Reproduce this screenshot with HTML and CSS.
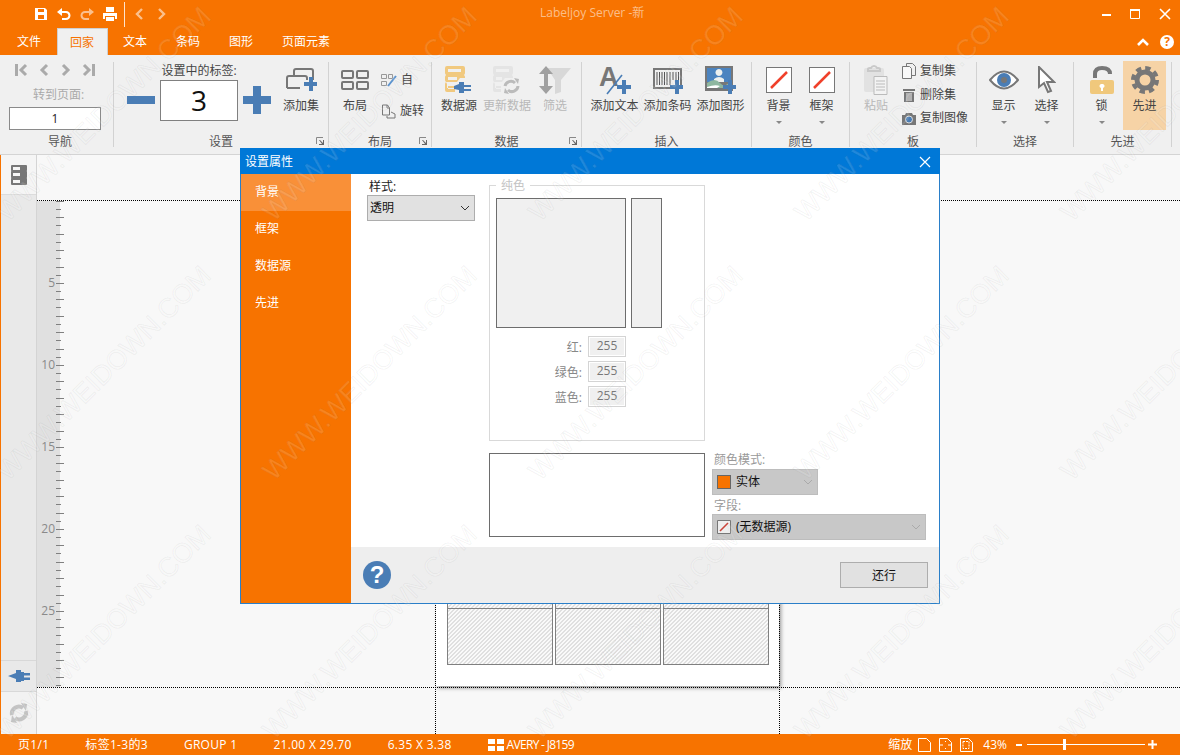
FILE: index.html
```html
<!DOCTYPE html>
<html lang="zh-CN">
<head>
  <meta charset="UTF-8">
  <title>Labeljoy Server</title>
  <link rel="stylesheet" href="styles.css">
</head>
<body>
  <header class="top">
    <div class="titlebar">
      <div class="quick">
        <svg class="q-icon" viewBox="0 0 14 14"><path fill="#fff" fill-rule="evenodd" d="M1 1h10l2 2v10H1zM4 2v3h6V2zM4 8v4h6V8z"/></svg>
        <svg class="q-icon" viewBox="0 0 14 14"><path fill="none" stroke="#fff" stroke-width="2" d="M3 5h6a3 3 0 0 1 0 7H5"/><path fill="#fff" d="M5 1v8L0 5z"/></svg>
        <svg class="q-icon dim" viewBox="0 0 14 14"><path fill="none" stroke="#fff" stroke-width="2" d="M11 5H5a3 3 0 0 0 0 7h4"/><path fill="#fff" d="M9 1v8l5-4z"/></svg>
        <svg class="q-icon" viewBox="0 0 14 14"><path fill="#fff" fill-rule="evenodd" d="M3 0h8v5H3zM0 6h14v6h-2V9H2v3H0zM3 10h8v4H3z"/></svg>
        <i class="q-sep"></i>
        <svg class="q-nav dim" viewBox="0 0 10 14"><path fill="none" stroke="#fff" stroke-width="2.4" d="M8 2 3 7l5 5"/></svg>
        <svg class="q-nav dim" viewBox="0 0 10 14"><path fill="none" stroke="#fff" stroke-width="2.4" d="m2 2 5 5-5 5"/></svg>
      </div>
      <div class="app-title">Labeljoy Server -新</div>
      <div class="win-controls">
        <svg viewBox="0 0 12 12"><path fill="#fff" d="M3 6h9v2H3z"/></svg>
        <svg viewBox="0 0 12 12"><path fill="none" stroke="#fff" d="M1.500 1.500h9v9h-9z"/><path fill="#fff" d="M1 1h10v2H1z"/></svg>
        <svg viewBox="0 0 12 12"><path stroke="#fff" stroke-width="1.600" d="m1 1 10 10M11 1 1 11"/></svg>
      </div>
    </div>
    <nav class="tabs">
      <a class="tab">文件</a>
      <a class="tab active">回家</a>
      <a class="tab">文本</a>
      <a class="tab">条码</a>
      <a class="tab">图形</a>
      <a class="tab">页面元素</a>
      <div class="tab-tools">
        <svg viewBox="0 0 12 8"><path fill="none" stroke="#fff" stroke-width="2.600" d="m1 7 5-5 5 5"/></svg>
        <span class="help-dot">?</span>
      </div>
    </nav>
  </header>

  <section class="ribbon">
    <div class="group g-nav">
      <div class="group-body column">
        <div class="nav-arrows">
          <svg viewBox="0 0 14 14"><path fill="#aaa" d="M1 1h3v12H1z"/><path fill="none" stroke="#aaa" stroke-width="3" d="M12 2 7 7l5 5"/></svg>
          <svg viewBox="0 0 14 14"><path fill="none" stroke="#aaa" stroke-width="3" d="M10 2 5 7l5 5"/></svg>
          <svg viewBox="0 0 14 14"><path fill="none" stroke="#aaa" stroke-width="3" d="m4 2 5 5-5 5"/></svg>
          <svg viewBox="0 0 14 14"><path fill="#aaa" d="M10 1h3v12h-3z"/><path fill="none" stroke="#aaa" stroke-width="3" d="m2 2 5 5-5 5"/></svg>
        </div>
        <div class="nav-label">转到页面:</div>
        <div class="page-input">1</div>
      </div>
      <div class="group-label">导航</div>
    </div>

    <div class="group g-set">
      <div class="group-body">
        <svg class="step" viewBox="0 0 28 41"><path fill="#4a7db5" d="M0 16h28v8H0z"/></svg>
        <div class="count">
          <div class="count-label">设置中的标签:</div>
          <div class="count-box">3</div>
        </div>
        <svg class="step" viewBox="0 0 28 41"><path fill="#4a7db5" d="M0 16h10V6h8v10h10v8H18v10h-8V24H0z"/></svg>
        <button class="rbtn add-set">
          <span class="ricon">
            <svg width="32" height="25" viewBox="0 0 32 25"><path fill="none" stroke="#777" stroke-width="2" d="M2 21V11q0-2 2-2h16q2 0 2 2v2M2 21h13M9 9V4q0-2 2-2h15q2 0 2 2v9"/><path fill="#4a7db5" d="M19 15h5v-5h4v5h4v4h-4v5h-4v-5h-5z"/></svg>
          </span>
          <span class="rtext">添加集</span>
        </button>
      </div>
      <div class="group-label">设置</div>
      <svg class="launcher" viewBox="0 0 8 8"><path fill="none" stroke="#888" d="M.5 7V.5H7"/><path fill="#666" d="M3 3h1l3 3V3h1v5H3V7h3z"/></svg>
    </div>

    <div class="group g-layout">
      <div class="group-body">
        <button class="rbtn wide36">
          <span class="ricon">
            <svg width="28" height="20" viewBox="0 0 28 20"><g fill="none" stroke="#777" stroke-width="2"><rect x="1" y="1" width="11" height="7" rx="1"/><rect x="16" y="1" width="11" height="7" rx="1"/><rect x="1" y="12" width="11" height="7" rx="1"/><rect x="16" y="12" width="11" height="7" rx="1"/></g></svg>
          </span>
          <span class="rtext">布局</span>
        </button>
        <div class="side-list layout-list">
          <div class="side-item">
            <svg width="16" height="14" viewBox="0 0 16 14"><g fill="none" stroke="#999"><path d="M.5 1.500h5v4h-5zM7.500 1.500h4v4h-4zM.5 8.500h5v4h-5z"/></g><path stroke="#5b93cf" stroke-width="2" d="m7 13 8-10"/></svg>
            <span>自</span>
          </div>
          <div class="side-item">
            <svg width="15" height="15" viewBox="0 0 15 15"><path fill="none" stroke="#777" d="M1.500 1h5l2 3v7h-7zM6 1v3h2.500M10 8l4 2v4H6v-2"/></svg>
            <span>旋转</span>
          </div>
        </div>
      </div>
      <div class="group-label">布局</div>
      <svg class="launcher" viewBox="0 0 8 8"><path fill="none" stroke="#888" d="M.5 7V.5H7"/><path fill="#666" d="M3 3h1l3 3V3h1v5H3V7h3z"/></svg>
    </div>

    <div class="group g-data">
      <div class="group-body">
        <button class="rbtn wide48">
          <span class="ricon">
            <svg width="28" height="28" viewBox="0 0 28 28"><path fill="#f1c97f" fill-rule="evenodd" d="M2 0h16q2 0 2 2v5q0 1-1 2 1 1 1 2v1h-5l-3 4H2q-1 0-1 1 1 0 1 1v4h8v4H2q-2 0-2-2v-6q0-1 1-2-1-1-1-2v-3q0-1 1-2-1-1-1-2V2q0-2 2-2zM3 3v3h13V3zM3 11v3h9v-3zM3 20v3h7v-3z"/><path fill="#4a7db5" d="M9 20l5-2v-2h5v3h7v2h-7v2h7v2h-7v2h-5v-3l-5-1z"/></svg>
          </span>
          <span class="rtext">数据源</span>
        </button>
        <button class="rbtn wide48 disabled">
          <span class="ricon">
            <svg width="28" height="28" viewBox="0 0 28 28"><path fill="#e4e4e4" fill-rule="evenodd" d="M2 0h16q2 0 2 2v5q0 1-1 2 1 1 1 2v1h-8l-3 4H2q-1 0-1 1 1 0 1 1v4h6v4H2q-2 0-2-2v-6q0-1 1-2-1-1-1-2v-3q0-1 1-2-1-1-1-2V2q0-2 2-2zM3 3v3h13V3zM3 11v3h6v-3zM3 20v3h5v-3z"/><g fill="none" stroke="#bbb" stroke-width="3"><path d="M12 20a6 6 0 0 1 10-3M25 20a6 6 0 0 1-10 4"/></g><path fill="#bbb" d="m21 12 5 1-1 5zM16 28l-5-1 1-5z"/></svg>
          </span>
          <span class="rtext">更新数据</span>
        </button>
        <button class="rbtn wide48 disabled">
          <span class="ricon">
            <svg width="32" height="28" viewBox="0 0 32 28"><path fill="#d8d8d8" d="M8 2h24l-10 12v12l-6 2V14z"/><path fill="#a0a0a0" d="M7 0l7 8H9v12h5l-7 8-7-8h5V8H0z"/></svg>
          </span>
          <span class="rtext">筛选</span>
        </button>
      </div>
      <div class="group-label">数据</div>
      <svg class="launcher" viewBox="0 0 8 8"><path fill="none" stroke="#888" d="M.5 7V.5H7"/><path fill="#666" d="M3 3h1l3 3V3h1v5H3V7h3z"/></svg>
    </div>

    <div class="group g-insert">
      <div class="group-body">
        <button class="rbtn wide53">
          <span class="ricon">
            <svg width="32" height="30" viewBox="0 0 32 30"><text x="0" y="21" class="svg-a">A</text><path stroke="#4a7db5" stroke-width="1.600" d="m8 29 15-19"/><path fill="#4a7db5" d="M18 20h5v-5h4v5h5v4h-5v5h-4v-5h-5z"/></svg>
          </span>
          <span class="rtext">添加文本</span>
        </button>
        <button class="rbtn wide53">
          <span class="ricon">
            <svg width="30" height="28" viewBox="0 0 30 28"><path fill="none" stroke="#777" stroke-width="2" d="M1 3h27v19H1z"/><path stroke="#555" d="M4 6v13M6.500 6v13M9 6v13M11.500 6v13M14 6v13M17 6v13M20 6v8M23 6v8M25.500 6v8"/><path fill="#4a7db5" d="M17 19h5v-5h4v5h4v4h-4v5h-4v-5h-5z"/></svg>
          </span>
          <span class="rtext">添加条码</span>
        </button>
        <button class="rbtn wide53">
          <span class="ricon">
            <svg width="31" height="28" viewBox="0 0 31 28"><path fill="#777" d="M0 0h28v25H0z"/><path fill="#4c84c0" d="M2 2h24v14H2z"/><path fill="#eef0ee" d="M14 3a3.500 3.500 0 1 1-.1 0zM9 13q5-4 10 0v3H9z"/><path fill="#8eb7a0" d="M2 17q8-6 13 0t11-3v8H2z"/><path fill="#fff" d="M2 21q8-3 13-1l-3 2H2z"/><path fill="#4a7db5" d="M18 19h5v-5h4v5h4v4h-4v5h-4v-5h-5z"/></svg>
          </span>
          <span class="rtext">添加图形</span>
        </button>
      </div>
      <div class="group-label">插入</div>
    </div>

    <div class="group g-color">
      <div class="group-body">
        <button class="rbtn wide43">
          <span class="ricon"><span class="swatch"><svg viewBox="0 0 24 24"><path stroke="#f0402a" stroke-width="2.500" d="m4 20 16-16"/></svg></span></span>
          <span class="rtext">背景</span>
          <i class="drop"></i>
        </button>
        <button class="rbtn wide43">
          <span class="ricon"><span class="swatch"><svg viewBox="0 0 24 24"><path stroke="#f0402a" stroke-width="2.500" d="m4 20 16-16"/></svg></span></span>
          <span class="rtext">框架</span>
          <i class="drop"></i>
        </button>
      </div>
      <div class="group-label">颜色</div>
    </div>

    <div class="group g-board">
      <div class="group-body">
        <button class="rbtn wide44 disabled">
          <span class="ricon">
            <svg width="24" height="30" viewBox="0 0 24 30"><path fill="#e2e2e2" d="M0 5q0-2 2-2h16q2 0 2 2v22H2q-2 0-2-2z"/><path fill="none" stroke="#c9c9c9" stroke-width="2" d="M4 6V4q0-1 2-1h1q1-2 3-2t3 2h1q2 0 2 1v2z"/><path fill="#f3f3f3" stroke="#bbb" d="M10 11.500h13v18H10z"/><path stroke="#bbb" d="M12 16h9M12 19h9M12 22h9M12 25h9"/></svg>
          </span>
          <span class="rtext">粘贴</span>
        </button>
        <div class="side-list board-list">
          <div class="side-item">
            <svg width="14" height="16" viewBox="0 0 14 16"><path fill="#f8f8f8" stroke="#777" d="M.5 3.500h7l2 2v10h-9z"/><path fill="none" stroke="#777" d="M4.500 3V.5h6l3 3v9H10"/></svg>
            <span>复制集</span>
          </div>
          <div class="side-item">
            <svg width="14" height="14" viewBox="0 0 14 14"><path fill="#777" d="M1 1h12v2H1zM2 4h10v10H2z"/><path stroke="#eee" d="M5 5v8M7 5v8M9 5v8"/></svg>
            <span>删除集</span>
          </div>
          <div class="side-item">
            <svg width="14" height="13" viewBox="0 0 14 13"><path fill="#777" d="M0 3h3l1-2h6l1 2h3v10H0z"/><circle cx="7" cy="7.500" r="3.500" fill="#4a7db5" stroke="#ddd"/></svg>
            <span>复制图像</span>
          </div>
        </div>
      </div>
      <div class="group-label">板</div>
    </div>

    <div class="group g-select">
      <div class="group-body">
        <button class="rbtn wide43">
          <span class="ricon">
            <svg width="30" height="20" viewBox="0 0 30 20"><path fill="#fff" stroke="#777" stroke-width="2" d="M1 10q14-17 28 0Q15 27 1 10z"/><circle cx="15" cy="10" r="7" fill="#4a7db5"/><circle cx="15" cy="10" r="3" fill="#777"/></svg>
          </span>
          <span class="rtext">显示</span>
          <i class="drop"></i>
        </button>
        <button class="rbtn wide43">
          <span class="ricon">
            <svg width="19" height="28" viewBox="0 0 19 28"><path fill="#fff" stroke="#777" stroke-width="2" d="M2 1v20l5-4 4 9 3-1-4-9h7z"/></svg>
          </span>
          <span class="rtext">选择</span>
          <i class="drop"></i>
        </button>
      </div>
      <div class="group-label">选择</div>
    </div>

    <div class="group g-adv">
      <div class="group-body">
        <button class="rbtn wide43">
          <span class="ricon">
            <svg width="24" height="28" viewBox="0 0 24 28"><path fill="none" stroke="#777" stroke-width="4" d="M5 12V8q0-6 7-6 8 0 8 6"/><rect y="14" width="24" height="14" rx="2" fill="#f0c87c"/><path fill="#fff" d="M12 18a2 2 0 0 1 1 4v3h-2v-3a2 2 0 0 1 1-4z"/></svg>
          </span>
          <span class="rtext">锁</span>
          <i class="drop"></i>
        </button>
        <button class="rbtn wide43 hot">
          <span class="ricon">
            <svg width="28" height="28" viewBox="0 0 28 28"><circle cx="14" cy="14" r="8" fill="none" stroke="#777" stroke-width="5"/><circle cx="14" cy="14" r="12" fill="none" stroke="#777" stroke-width="4" stroke-dasharray="5.400 4"/></svg>
          </span>
          <span class="rtext">先进</span>
        </button>
      </div>
      <div class="group-label">先进</div>
    </div>
  </section>

  <main class="main">
    <aside class="rail">
      <div class="rail-btn rail-top">
        <svg width="16" height="20" viewBox="0 0 16 20"><path fill="#777" fill-rule="evenodd" d="M1 0h14q1 0 1 1v4q0 1-.5 1 .5 0 .5 1v5q0 1-.5 1 .5 0 .5 1v5q0 1-1 1H1q-1 0-1-1v-5q0-1 .5-1-.5 0-.5-1V7q0-1 .5-1Q0 6 0 5V1q0-1 1-1zM2 2v3h7V2zM2 8v3h7V8zM2 15v3h7v-3z"/></svg>
      </div>
      <div class="rail-fill"></div>
      <div class="rail-btn rail-plug">
        <svg width="22" height="14" viewBox="0 0 22 14"><path fill="#4a7db5" d="M0 7l8-3V1h5v2h3v1h6v2.500h-6v2h6V11h-6v1h-3v1H8v-3z"/></svg>
      </div>
      <div class="rail-btn rail-sync">
        <svg width="20" height="20" viewBox="0 0 20 20"><g fill="none" stroke="#c4c4c4" stroke-width="4"><path d="M3 12a7 7 0 0 1 11-7"/><path d="M17 8a7 7 0 0 1-11 7"/></g><path fill="#c4c4c4" d="m12 0 6 1-1 7zM8 20l-6-1 1-7z"/></svg>
      </div>
    </aside>
    <div class="canvas">
      <div class="ruler">
        <div class="ruler-nums"><span>5</span><span>10</span><span>15</span><span>20</span><span>25</span></div>
      </div>
      <i class="dot-h dot-top"></i>
      <i class="dot-h dot-bottom"></i>
      <i class="dot-v dot-left"></i>
      <i class="dot-v dot-right"></i>
      <div class="paper">
        <div class="cell"></div><div class="cell"></div><div class="cell"></div>
        <div class="cell"></div><div class="cell"></div><div class="cell"></div>
      </div>
    </div>
  </main>

  <footer class="status">
    <span>页1/1</span>
    <span>标签1-3的3</span>
    <span>GROUP 1</span>
    <span>21.00 X 29.70</span>
    <span>6.35 X 3.38</span>
    <div class="avery">
      <svg width="16" height="12" viewBox="0 0 16 12"><path fill="#fff" d="M0 0h7v5H0zM9 0h7v5H9zM0 7h7v5H0zM9 7h7v5H9z"/></svg>
      AVERY - J8159
    </div>
    <div class="zoom">
      <span>缩放</span>
      <svg width="13" height="14" viewBox="0 0 13 14"><path fill="none" stroke="#fff" d="M.5.500h8l4 4v9H.5z"/></svg>
      <svg width="13" height="14" viewBox="0 0 13 14"><path fill="none" stroke="#fff" d="M.5.500h8l4 4v9H.5zM.5 7H4M9 7h3.500M6.500 3v1M6.500 10v1"/></svg>
      <svg width="13" height="14" viewBox="0 0 13 14"><path fill="none" stroke="#fff" d="M.5.500h8l4 4v9H.5z"/><path fill="none" stroke="#fff" stroke-dasharray="2 1" d="M3 3.500h6v7H3z"/></svg>
      <span class="zoom-val">43%</span>
      <i class="zoom-minus"></i>
      <div class="slider"><i class="thumb"></i></div>
      <svg width="9" height="9" viewBox="0 0 9 9"><path fill="#fff" d="M3.500 0h2v3.500H9v2H5.500V9h-2V5.500H0v-2h3.500z"/></svg>
    </div>
  </footer>

  <div class="dialog">
    <div class="dlg-title">
      <span>设置属性</span>
      <svg width="12" height="12" viewBox="0 0 12 12"><path stroke="#fff" stroke-width="1.200" d="m1 1 10 10M11 1 1 11"/></svg>
    </div>
    <div class="dlg-main">
      <ul class="dlg-side">
        <li class="selected">背景</li>
        <li>框架</li>
        <li>数据源</li>
        <li>先进</li>
      </ul>
      <div class="dlg-right">
        <div class="dlg-body">
          <div class="style-col">
            <div class="style-label">样式:</div>
            <div class="select">透明
              <svg class="chev" viewBox="0 0 10 6"><path fill="none" stroke="#333" d="m1 1 4 4 4-4"/></svg>
            </div>
          </div>
          <div class="color-col">
            <div class="solid">
              <span class="legend">纯色</span>
              <div class="pickers">
                <div class="pick-main"></div>
                <div class="pick-bar"></div>
              </div>
              <div class="rgb"><label>红:</label><span class="rgb-val">255</span></div>
              <div class="rgb"><label>绿色:</label><span class="rgb-val">255</span></div>
              <div class="rgb"><label>蓝色:</label><span class="rgb-val">255</span></div>
            </div>
            <div class="preview"></div>
          </div>
          <div class="mode-col">
            <div class="mode-label">颜色模式:</div>
            <div class="select gray mode-select">
              <i class="mini-swatch"></i>实体
              <svg class="chev" viewBox="0 0 10 6"><path fill="none" stroke="#aaa" d="m1 1 4 4 4-4"/></svg>
            </div>
            <div class="mode-label field-label">字段:</div>
            <div class="select gray">
              <svg class="mini-none" viewBox="0 0 14 14"><path fill="#eee" stroke="#777" d="M.5.500h13v13H.5z"/><path stroke="#c9443a" stroke-width="1.600" d="m3 11 8-8"/></svg>(无数据源)
              <svg class="chev" viewBox="0 0 10 6"><path fill="none" stroke="#aaa" d="m1 1 4 4 4-4"/></svg>
            </div>
          </div>
        </div>
        <div class="dlg-foot">
          <span class="dlg-help">?</span>
          <button class="run-btn">还行</button>
        </div>
      </div>
    </div>
  </div>

  <div class="watermark">
    <span>WWW.WEIDOWN.COM</span><span>WWW.WEIDOWN.COM</span><span>WWW.WEIDOWN.COM</span><span>WWW.WEIDOWN.COM</span><span>WWW.WEIDOWN.COM</span>
    <span>WWW.WEIDOWN.COM</span><span>WWW.WEIDOWN.COM</span><span>WWW.WEIDOWN.COM</span><span>WWW.WEIDOWN.COM</span><span>WWW.WEIDOWN.COM</span>
    <span>WWW.WEIDOWN.COM</span><span>WWW.WEIDOWN.COM</span><span>WWW.WEIDOWN.COM</span><span>WWW.WEIDOWN.COM</span><span>WWW.WEIDOWN.COM</span>
  </div>
</body>
</html>
```

FILE: styles.css
```css
* {
  box-sizing: border-box;
}
html, body {
  height: 100%;
}
body {
  margin: 0;
  height: 755px;
  overflow: hidden;
  position: relative;
  display: flex;
  flex-direction: column;
  font-family: "Open Sans", "Noto Sans CJK SC", sans-serif;
  font-size: 12px;
  line-height: 18px;
  color: #444;
  background: #f8f8f8;
}
svg {
  display: block;
  flex: none;
}

/* title bar and tabs */
.top {
  background: #f77300;
  color: #fff;
  height: 55px;
}
.titlebar {
  height: 28px;
  display: flex;
  align-items: center;
  position: relative;
}
.quick {
  display: flex;
  align-items: center;
  padding-left: 34px;
}
.q-icon {
  width: 14px;
  height: 14px;
  margin-right: 9px;
}
.dim {
  opacity: .55;
}
.q-sep {
  width: 1px;
  height: 25px;
  background: #fff;
  opacity: .8;
  margin: 0 9px 0 -2px;
}
.q-nav {
  width: 10px;
  height: 14px;
  margin-right: 13px;
}
.app-title {
  position: absolute;
  left: 540px;
  top: 4px;
  color: rgba(255,255,255,.55);
}
.win-controls {
  margin-left: auto;
  display: flex;
  gap: 18px;
  padding-right: 9px;
}
.win-controls svg {
  width: 12px;
  height: 12px;
}
.tabs {
  height: 27px;
  display: flex;
  align-items: flex-end;
  padding-left: 3px;
}
.tab {
  height: 27px;
  line-height: 28px;
  padding: 0 14px;
  margin-right: 1px;
  color: #fff;
}
.tab.active {
  background: #f0f0f0;
  color: #f77300;
  border: 1px solid #cfcfcf;
  border-bottom: 0;
  padding: 0 13px 0 12px;
  margin-left: 1px;
  margin-right: 1px;
}
.tab-tools {
  margin-left: auto;
  display: flex;
  align-items: center;
  gap: 11px;
  height: 27px;
  padding-right: 6px;
}
.tab-tools svg {
  width: 12px;
  height: 8px;
}
.help-dot {
  width: 14px;
  height: 14px;
  border-radius: 50%;
  background: #fff;
  color: #f77300;
  font-weight: 700;
  font-size: 12px;
  line-height: 14px;
  text-align: center;
}

/* ribbon */
.ribbon {
  height: 100px;
  background: #f0f0f0;
  border-bottom: 1px solid #d4d4d4;
  padding-top: 7px;
  display: flex;
  align-items: flex-start;
}
.group {
  height: 85px;
  border-right: 1px solid #d2d2d2;
  display: flex;
  flex-direction: column;
  position: relative;
}
.g-nav { width: 114px; padding-left: 7px; }
.g-set { width: 215px; }
.g-layout { width: 103px; }
.g-data { width: 150px; }
.g-insert { width: 170px; }
.g-color { width: 98px; }
.g-board { width: 127px; }
.g-select { width: 97px; }
.g-adv { width: 98px; }
.group-body {
  flex: 1;
  display: flex;
  align-items: flex-start;
  padding-top: 1px;
  min-height: 0;
}
.group-body.column {
  flex-direction: column;
}
.group-label {
  height: 14px;
  line-height: 14px;
  margin-bottom: -2px;
  text-align: center;
  color: #555;
}
.launcher {
  position: absolute;
  right: 4px;
  bottom: 2px;
  width: 8px;
  height: 8px;
}
.rbtn {
  background: none;
  border: 0;
  padding: 0;
  font: inherit;
  color: #444;
  display: flex;
  flex-direction: column;
  align-items: center;
  flex: none;
}
.ricon {
  height: 33px;
  display: flex;
  align-items: center;
  justify-content: center;
}
.rtext {
  white-space: nowrap;
  line-height: 18px;
  margin-top: 1px;
}
.disabled .rtext {
  color: #b8b8b8;
}
.drop {
  margin-top: 6px;
  border: 3px solid transparent;
  border-top-color: #888;
  border-bottom: 0;
}
.wide36 { width: 36px; }
.wide43 { width: 43px; }
.wide44 { width: 44px; }
.wide48 { width: 48px; }
.wide53 { width: 53px; }

.g-layout .group-body { padding-left: 8px; }
.g-data .group-body { padding-left: 3px; }
.g-insert .group-body { padding-left: 6px; }
.g-color .group-body { padding-left: 5px; }
.g-board .group-body { padding-left: 4px; }
.g-select .group-body { padding-left: 5px; }
.g-adv .group-body { padding-left: 6px; }

.side-list {
  display: flex;
  flex-direction: column;
}
.side-item {
  display: flex;
  align-items: center;
  gap: 4px;
  height: 16px;
  white-space: nowrap;
}
.layout-list {
  margin-left: 8px;
  padding-top: 9px;
  gap: 15px;
}
.board-list {
  margin-left: 4px;
  gap: 7.500px;
}

.nav-arrows {
  display: flex;
  margin-left: 7px;
}
.nav-arrows svg {
  width: 14px;
  height: 14px;
  margin-right: 8.500px;
}
.nav-label {
  color: #aaa;
  margin: 9px 0 3px 26px;
}
.page-input {
  width: 92px;
  height: 23px;
  margin-left: 2px;
  background: #fff;
  border: 1px solid #8a8a8a;
  text-align: center;
  line-height: 21px;
  color: #222;
}
.g-set .group-body {
  padding-left: 13px;
  align-items: flex-start;
}
.step {
  width: 28px;
  height: 41px;
  margin-top: 17px;
}
.count {
  width: 78px;
  margin: 0 5px;
}
.count-label {
  height: 17px;
  line-height: 16px;
  text-align: center;
  white-space: nowrap;
}
.count-box {
  height: 41px;
  background: #fff;
  border: 1px solid #808080;
  text-align: center;
  font-size: 28px;
  line-height: 39px;
  color: #111;
}
.add-set {
  width: 44px;
  margin-left: 8px;
}
.svg-a {
  font-family: "Liberation Sans", sans-serif;
  font-size: 27px;
  font-weight: 700;
  fill: #777;
}
.swatch {
  width: 26px;
  height: 26px;
  background: #fff;
  border: 1px solid #777;
  display: block;
}
.hot {
  background: #f6d3a6;
  height: 69px;
  margin-top: -2px;
  padding-top: 2px;
}

/* work area */
.main {
  flex: 1;
  display: flex;
  min-height: 0;
}
.rail {
  width: 37px;
  border-left: 1px solid #f77300;
  border-right: 1px solid #d4d4d4;
  display: flex;
  flex-direction: column;
  background: #e9e9e9;
}
.rail-btn {
  display: flex;
  align-items: center;
  justify-content: center;
}
.rail-top {
  height: 40px;
  background: #f5f5f5;
  border-bottom: 1px solid #dcdcdc;
}
.rail-fill {
  flex: 1;
}
.rail-plug {
  height: 32px;
  border-top: 1px solid #d8d8d8;
  border-bottom: 1px solid #d8d8d8;
}
.rail-sync {
  height: 42px;
  background: #f2f2f2;
}
.canvas {
  flex: 1;
  position: relative;
  overflow: hidden;
  background: #f8f8f8;
}
.ruler {
  position: absolute;
  left: 0;
  top: 46px;
  width: 23px;
  height: 486px;
  background: #e0e0e0;
}
.ruler::after {
  content: "";
  position: absolute;
  left: 19px;
  top: 0;
  width: 8px;
  height: 100%;
  background:
    repeating-linear-gradient(#808080 0, #808080 1px, transparent 1px, transparent 16.400px) 0 0 / 8px 100% no-repeat,
    repeating-linear-gradient(#808080 0, #808080 1px, transparent 1px, transparent 16.400px) 0 8px / 5px 100% no-repeat;
}
.ruler-nums {
  margin-top: 41px;
  display: flex;
  flex-direction: column;
  color: #8a8a8a;
  text-align: right;
  padding-right: 5px;
}
.ruler-nums span {
  height: 82px;
  line-height: 82px;
}
.dot-h {
  position: absolute;
  left: 0;
  right: 0;
  height: 1px;
  background: repeating-linear-gradient(90deg, #000 0 1px, transparent 1px 2px);
}
.dot-top { top: 45px; }
.dot-bottom { top: 532px; }
.dot-v {
  position: absolute;
  top: 0;
  bottom: 0;
  width: 1px;
  background: repeating-linear-gradient(#000 0 1px, transparent 1px 2px);
}
.dot-left { left: 398px; }
.dot-right { left: 742px; }
.paper {
  position: absolute;
  left: 399px;
  top: 46px;
  width: 343px;
  height: 485px;
  background: #fff;
  box-shadow: 2px 2px 4px rgba(0,0,0,.4);
  padding: 0 11px 21px;
  display: grid;
  grid-template-columns: repeat(3, 106px);
  column-gap: 2px;
  grid-auto-rows: 56px;
  align-content: end;
}
.cell {
  border: 1px solid #808080;
  margin-top: -1px;
  background: repeating-linear-gradient(-45deg, #e0e0e0 0 1.414px, #fafafa 1.414px 2.828px);
}

/* status bar */
.status {
  height: 21px;
  background: #f77300;
  color: #fff;
  display: flex;
  align-items: center;
  gap: 36px;
  padding-left: 18px;
  white-space: nowrap;
}
.status > span {
  letter-spacing: .3px;
}
.avery {
  display: flex;
  align-items: center;
  gap: 3px;
  letter-spacing: -.7px;
}
.zoom {
  margin-left: auto;
  display: flex;
  align-items: center;
  padding-right: 23px;
}
.zoom svg {
  margin-left: 8px;
}
.zoom span + svg {
  margin-left: 6px;
}
.zoom .zoom-val + .zoom-minus {
  margin-left: 9px;
}
.zoom-val {
  margin-left: 10px;
}
.zoom-minus {
  width: 6px;
  height: 2px;
  background: #fff;
}
.slider {
  width: 118px;
  height: 1px;
  background: #fff;
  margin: 0 -5px 0 5px;
  position: relative;
}
.thumb {
  position: absolute;
  left: 36px;
  top: -5px;
  width: 3px;
  height: 11px;
  background: #fff;
}

/* dialog */
.dialog {
  position: absolute;
  left: 240px;
  top: 148px;
  width: 700px;
  height: 456px;
  background: #fff;
  border: 1px solid #2a7fc9;
  display: flex;
  flex-direction: column;
}
.dlg-title {
  height: 26px;
  margin: -1px -1px 0;
  padding: 2px 9px 0 5px;
  background: #0078d7;
  color: #fff;
  display: flex;
  align-items: center;
  justify-content: space-between;
  flex: none;
}
.dlg-main {
  flex: 1;
  display: flex;
  min-height: 0;
}
.dlg-side {
  width: 110px;
  margin: 0;
  padding: 0;
  list-style: none;
  background: #f77300;
  color: #fff;
}
.dlg-side li {
  height: 37px;
  line-height: 35px;
  padding-left: 14px;
}
.dlg-side .selected {
  background: #f99038;
}
.dlg-right {
  flex: 1;
  display: flex;
  flex-direction: column;
}
.dlg-body {
  flex: 1;
  display: flex;
  padding: 11px 0 0 16px;
}
.style-col {
  width: 108px;
  margin-right: 14px;
}
.style-label {
  height: 10px;
  line-height: 3px;
  color: #222;
  padding-left: 2px;
}
.select {
  position: relative;
  height: 26px;
  line-height: 24px;
  background: #e1e1e1;
  border: 1px solid #adadad;
  padding-left: 2px;
  color: #111;
  display: flex;
  align-items: center;
}
.chev {
  position: absolute;
  right: 4px;
  top: 9px;
  width: 10px;
  height: 6px;
}
.color-col {
  width: 216px;
}
.solid {
  position: relative;
  height: 256px;
  border: 1px solid #d9d9d9;
  padding: 12px 6px 0;
}
.legend {
  position: absolute;
  left: 6px;
  top: -9px;
  padding: 0 5px;
  background: #fff;
  color: #c4c4c4;
}
.pickers {
  display: flex;
  gap: 5px;
  margin-bottom: 8px;
}
.pick-main,
.pick-bar {
  height: 130px;
  background: #f0f0f0;
  border: 1px solid #6d6d6d;
}
.pick-main { width: 130px; }
.pick-bar { width: 31px; }
.rgb {
  display: flex;
  justify-content: flex-end;
  align-items: center;
  width: 130px;
  gap: 6px;
  height: 21px;
  margin-bottom: 4px;
  color: #888;
}
.rgb label {
  position: relative;
  top: 1px;
}
.rgb-val {
  width: 38px;
  height: 21px;
  border: 1px solid #d4d4d4;
  background: #f0f0f0;
  box-shadow: inset 0 0 0 1px #fff;
  text-align: center;
  line-height: 18px;
  color: #777;
}
.preview {
  height: 84px;
  margin-top: 12px;
  border: 1px solid #6d6d6d;
}
.mode-col {
  width: 214px;
  margin-left: 7px;
  padding-top: 266px;
}
.mode-label {
  height: 18px;
  line-height: 18px;
  color: #999;
  padding-left: 2px;
}
.field-label {
  margin-top: 3px;
  height: 16px;
  line-height: 16px;
}
.mode-select {
  width: 106px;
}
.select.gray {
  background: #c8c8c8;
  border-color: #bdbdbd;
  padding-left: 4px;
  gap: 5px;
}
.mini-swatch {
  width: 14px;
  height: 14px;
  background: #f77300;
  border: 1px solid #666;
}
.mini-none {
  width: 14px;
  height: 14px;
}
.dlg-foot {
  height: 56px;
  flex: none;
  background: #eee;
  display: flex;
  align-items: center;
  justify-content: space-between;
  padding: 0 11px 0 12px;
}
.dlg-help {
  width: 28px;
  height: 28px;
  border-radius: 50%;
  background: #4a7db5;
  color: #fff;
  font-family: "Liberation Sans", sans-serif;
  font-weight: 700;
  font-size: 24px;
  line-height: 28px;
  text-align: center;
}
.run-btn {
  width: 88px;
  height: 26px;
  padding: 2px 0 0;
  background: #e1e1e1;
  border: 1px solid #adadad;
  font: inherit;
  color: #111;
}

/* watermark lies over everything */
.watermark {
  position: absolute;
  left: -29px;
  top: -16px;
  display: grid;
  grid-template-columns: repeat(5, 266px);
  grid-auto-rows: 259px;
  place-items: center;
  pointer-events: none;
}
.watermark span {
  transform: rotate(-45deg);
  white-space: nowrap;
  font-family: "Liberation Sans", sans-serif;
  font-size: 27px;
  line-height: 30px;
  color: rgba(255,255,255,.12);
  -webkit-text-stroke: 1px rgba(110,110,110,.07);
}
```
